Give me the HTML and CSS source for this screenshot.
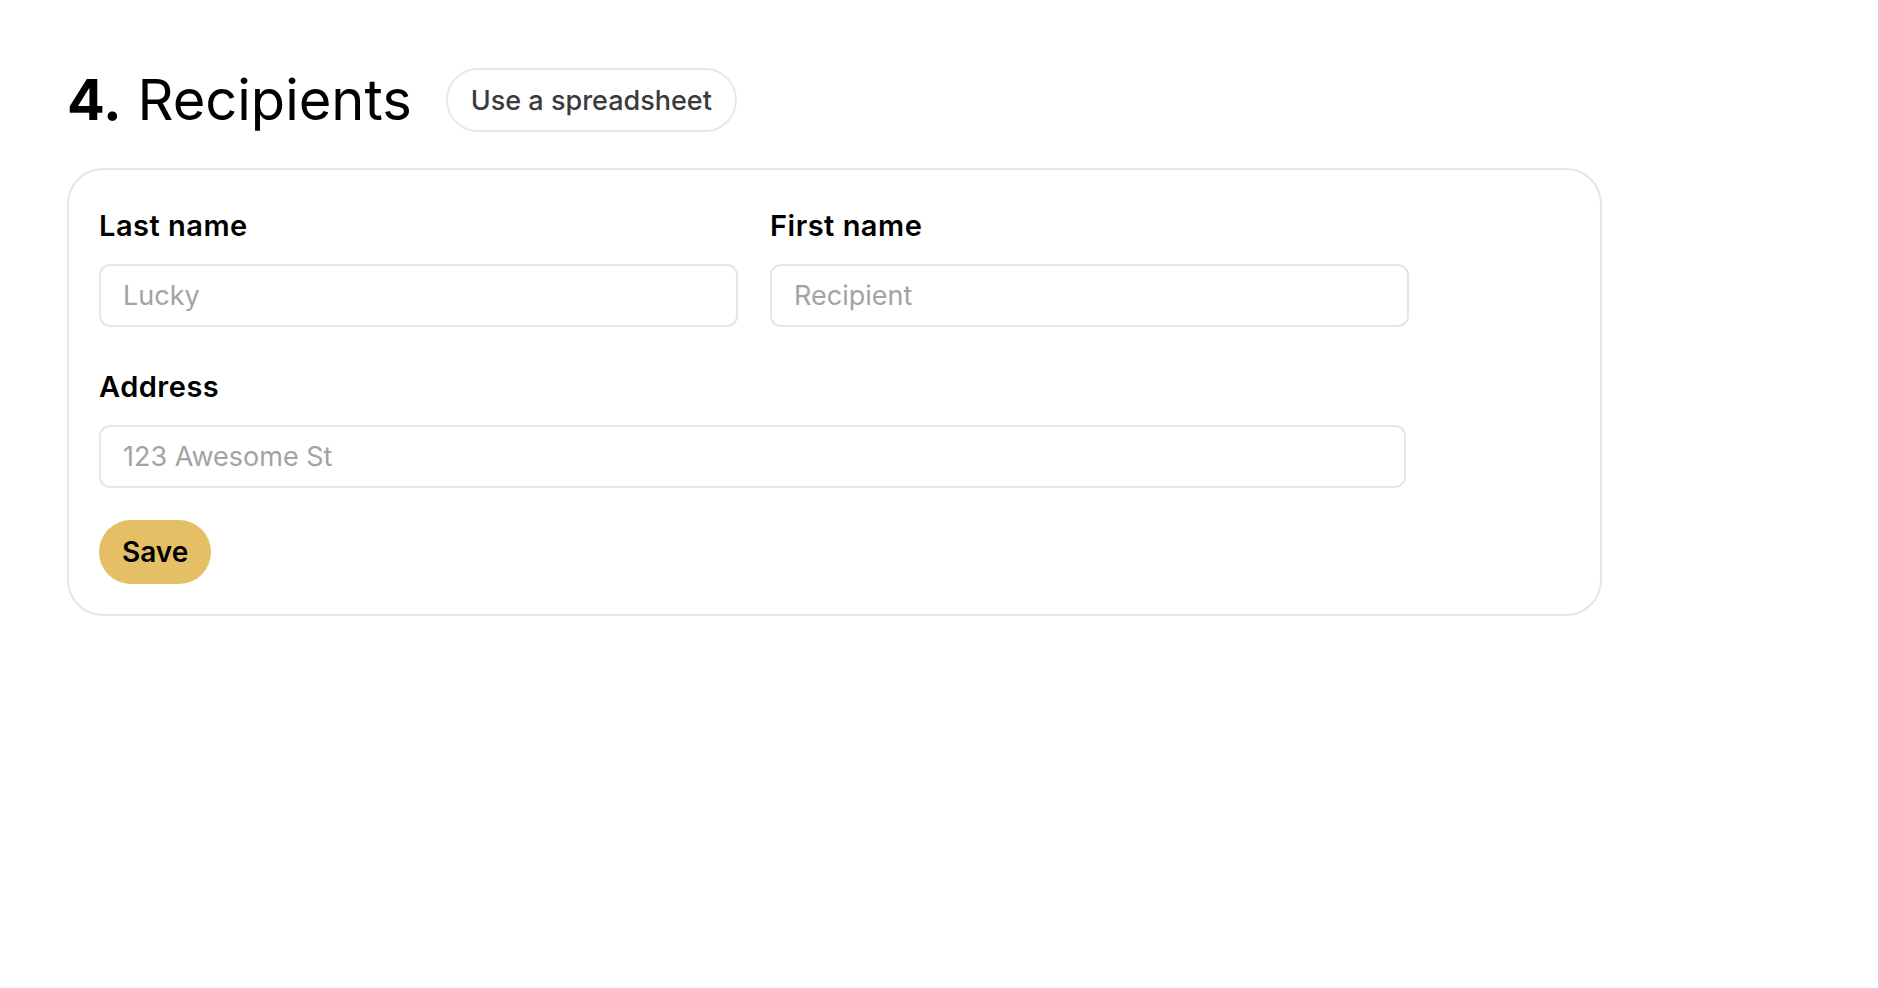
FILE: index.html
```html
<!DOCTYPE html>
<html lang="en">
<head>
<meta charset="utf-8">
<title>Recipients</title>
<link rel="stylesheet" href="styles.css">
</head>
<body>
<main class="page">
  <div class="section-head">
    <h2 class="section-title"><span class="step">4.</span> Recipients</h2>
    <button class="pill-btn" type="button">Use a spreadsheet</button>
  </div>
  <form class="card">
    <div class="row">
      <div class="field">
        <label class="label" for="last">Last name</label>
        <input class="input" id="last" type="text" placeholder="Lucky">
      </div>
      <div class="field">
        <label class="label" for="first">First name</label>
        <input class="input" id="first" type="text" placeholder="Recipient">
      </div>
    </div>
    <div class="field field-wide">
      <label class="label" for="addr">Address</label>
      <input class="input" id="addr" type="text" placeholder="123 Awesome St">
    </div>
    <div class="actions">
      <button class="save-btn" type="button">Save</button>
    </div>
  </form>
</main>
</body>
</html>
```
FILE: styles.css
```css
* { box-sizing: border-box; }
html, body { margin: 0; padding: 0; background: #fff; }
body {
  font-family: "Inter", "Lato", sans-serif;
  color: #000;
}
.page {
  padding: 64px 0 0 67px;
}
.section-head {
  display: flex;
  align-items: center;
  gap: 34px;
  height: 72px;
  margin-bottom: 32px;
}
.section-title {
  margin: 0;
  font-size: 56px;
  font-weight: 400;
  line-height: 72px;
  color: #000;
}
.step { font-weight: 700; }
.pill-btn {
  height: 64px;
  padding: 0 23px;
  border: 2px solid #e8e8e8;
  border-radius: 32px;
  background: #fff;
  font-family: inherit;
  font-size: 27px;
  font-weight: 500;
  color: #3a3a3f;
}
.card {
  width: 1535px;
  border: 2px solid #e6e6e6;
  border-radius: 36px;
  padding: 39px 30px 30px 30px;
}
.row {
  display: flex;
  gap: 32px;
}
.field {
  display: flex;
  flex-direction: column;
  width: 639px;
}
.field-wide {
  width: 1307px;
  margin-top: 43px;
}
.label {
  font-size: 29px;
  font-weight: 600;
  line-height: 34px;
  letter-spacing: 0.5px;
  margin-bottom: 21px;
}
.input {
  height: 63px;
  border: 2px solid #e6e6e6;
  border-radius: 11px;
  padding: 0 22px;
  font-family: inherit;
  font-size: 27px;
  color: #000;
  outline: none;
}
.input::placeholder { color: #a3a3a3; }
.actions {
  margin-top: 32px;
}
.save-btn {
  height: 64px;
  padding: 0 23px;
  border: none;
  border-radius: 32px;
  background: #e4bf66;
  font-family: inherit;
  font-size: 28px;
  font-weight: 600;
  color: #000;
}
```
